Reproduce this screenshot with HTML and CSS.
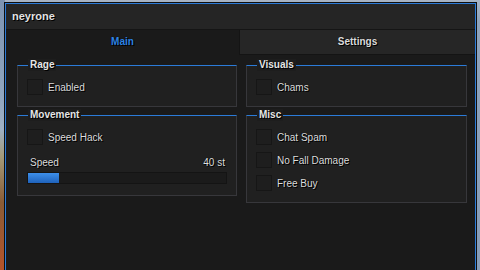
FILE: index.html
```html
<!DOCTYPE html>
<html>
<head>
<meta charset="utf-8">
<link rel="stylesheet" href="styles.css">
</head>
<body>
<div class="window">
  <div class="titlebar">neyrone</div>
  <div class="tabs">
    <div class="tab active">Main</div>
    <div class="tab">Settings</div>
  </div>
  <div class="content">
    <div class="col">
      <div class="group rage">
        <span class="legend">Rage</span>
        <div class="check"><span class="box"></span><span>Enabled</span></div>
      </div>
      <div class="group movement">
        <span class="legend">Movement</span>
        <div class="check"><span class="box"></span><span>Speed Hack</span></div>
        <div class="slider-row"><span>Speed</span><span>40 st</span></div>
        <div class="slider"><div class="fill" style="width:15.7%"></div></div>
      </div>
    </div>
    <div class="col">
      <div class="group visuals">
        <span class="legend">Visuals</span>
        <div class="check"><span class="box"></span><span>Chams</span></div>
      </div>
      <div class="group misc">
        <span class="legend">Misc</span>
        <div class="check"><span class="box"></span><span>Chat Spam</span></div>
        <div class="check"><span class="box"></span><span>No Fall Damage</span></div>
        <div class="check"><span class="box"></span><span>Free Buy</span></div>
      </div>
    </div>
  </div>
</div>
</body>
</html>
```
FILE: styles.css
```css
html, body {
  margin: 0;
  padding: 0;
  width: 480px;
  height: 270px;
  overflow: hidden;
}
body {
  font-family: "Liberation Sans", Arial, sans-serif;
  font-size: 10px;
  color: #dedede;
  background:
    linear-gradient(to bottom, #7d93b0 0, #90a5be 35%, #9fb0c3 48%, #a49a78 58%, #8a5c36 75%, #b4532a 100%) left top / 5px 100% no-repeat,
    linear-gradient(to bottom, #a8b4c4 0, #8fa3bb 8%, #879cb6 100%);
}
.window {
  box-sizing: border-box;
  margin: 3px 0 0 5px;
  width: 471px;
  height: 270px;
  border: 1px solid #2b7bd8;
  outline: 1px solid #0f0f0f;
  background: #1a1a1a;
  display: flex;
  flex-direction: column;
}
.titlebar {
  height: 25px;
  line-height: 25px;
  padding-left: 6px;
  background: #252525;
  border-bottom: 1px solid #151515;
  font-size: 11px;
  font-weight: bold;
  color: #e4e4e4;
  text-shadow: 1px 1px 0 #000, 0 0 1px #000;
}
.tabs {
  display: flex;
  height: 25px;
}
.tab {
  flex: 1;
  text-align: center;
  line-height: 24px;
  font-weight: bold;
  color: #dcdcdc;
  text-shadow: 1px 1px 0 #000, 0 0 1px #000;
  background: #262626;
  border-left: 1px solid #141414;
  border-bottom: 1px solid #141414;
}
.tab.active {
  background: #1a1a1a;
  border-left: none;
  border-bottom: none;
  color: #2f84e4;
  flex: 0 0 233px;
}
.content {
  display: flex;
  gap: 9px;
  padding: 10px 8px 0 11px;
}
.col {
  display: flex;
  flex-direction: column;
  gap: 8px;
}
.col:first-child { width: 220px; }
.col:last-child { width: 221px; }
.group {
  position: relative;
  box-sizing: border-box;
  border: 1px solid #37373b;
  border-top-color: #2b7bd8;
  background: #202020;
  padding: 13px 9px 11px;
  display: flex;
  flex-direction: column;
  gap: 7px;
}
.legend {
  position: absolute;
  left: 10px;
  top: -7px;
  line-height: 12px;
  padding: 0 2px;
  background: #1d1d1d;
  font-size: 10px;
  font-weight: bold;
  color: #e6e6e6;
  text-shadow: 1px 1px 0 #000, 0 0 1px #000;
}
.check {
  display: flex;
  align-items: center;
  gap: 5px;
  height: 16px;
  text-shadow: 1px 1px 0 #000, 0 0 1px #000;
}
.box {
  box-sizing: border-box;
  width: 16px;
  height: 16px;
  border: 1px solid #161616;
  background: #1e1e1e;
}
.slider-row {
  display: flex;
  justify-content: space-between;
  padding: 0 2px 0 3px;
  margin-top: 4px;
  line-height: 14px;
  text-shadow: 1px 1px 0 #000, 0 0 1px #000;
}
.slider {
  box-sizing: border-box;
  height: 12px;
  margin-top: -5px;
  border: 1px solid #141414;
  background: #1b1b1b;
}
.fill {
  height: 100%;
  background: linear-gradient(to bottom, #3d8fea, #1f62bb);
}
```
